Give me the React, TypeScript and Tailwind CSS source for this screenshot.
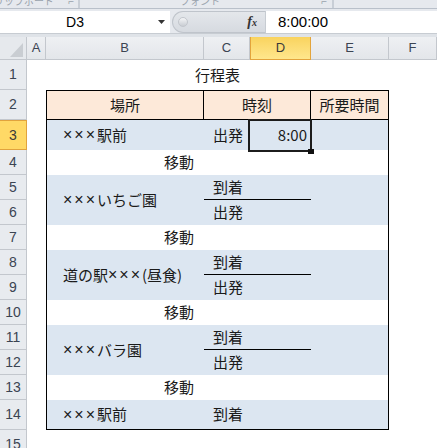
import React from "react"

const cols = ["A", "B", "C", "D", "E", "F"]
const colStart = ["col-start-2", "col-start-3", "col-start-4", "col-start-5", "col-start-6", "col-start-7"]
const rowStart = [
  "row-start-2", "row-start-3", "row-start-4", "row-start-5", "row-start-6",
  "row-start-7", "row-start-8", "row-start-9", "row-start-10", "row-start-11",
  "row-start-12", "row-start-13", "row-start-14", "row-start-15", "row-start-16",
]

const jp = "font-['Noto_Sans_CJK_JP',sans-serif] text-[15px] text-[#1a1a1a]"

// the reference's × marks are narrow half-width glyphs
function Xs() {
  return <span className="font-['Liberation_Sans',sans-serif] text-[16px] tracking-[2px]">×××</span>
}

function ColHeader({ label, i }: { label: string; i: number }) {
  const active = label === "D"
  return (
    <div
      className={`${colStart[i]} row-start-1 flex items-center justify-center text-[13px] font-['Liberation_Sans',sans-serif] border-b ${
        active
          ? "bg-gradient-to-b from-[#f9d35e] to-[#ffe78c] border-r border-l border-[#e3a43c] text-[#3a3a3a]"
          : "bg-gradient-to-b from-[#eef0f3] to-[#e3e6ea] border-r border-[#c3c7cd] text-[#3b4452]"
      }`}
    >
      {label}
    </div>
  )
}

function RowHeader({ n }: { n: number }) {
  const active = n === 3
  return (
    <div
      className={`col-start-1 ${rowStart[n - 1]} flex items-center justify-center text-[14px] font-['Liberation_Sans',sans-serif] border-r border-b ${
        active
          ? "bg-[#ffd966] border-[#e1a33d] border-t text-[#3a3a3a]"
          : "bg-[#e8ebef] border-[#c3c7cd] text-[#3b4452]"
      }`}
    >
      {n}
    </div>
  )
}

function Group({ row, name }: { row: number; name: React.ReactNode }) {
  // row = first inner grid row of a two-row stop
  const r1 = ["row-start-4", "row-start-7", "row-start-10"][[4, 7, 10].indexOf(row)]
  const r2 = ["row-start-5", "row-start-8", "row-start-11"][[4, 7, 10].indexOf(row)]
  return (
    <>
      <div className={`col-start-1 ${r1} row-span-2 bg-[#dce6f1] flex items-center pl-[16px]`}>{name}</div>
      <div className={`col-start-2 col-span-2 ${r1} bg-[#dce6f1] flex items-center pl-[9px] border-b border-black`}>到着</div>
      <div className={`col-start-2 col-span-2 ${r2} bg-[#dce6f1] flex items-center pl-[9px]`}>出発</div>
      <div className={`col-start-4 ${r1} row-span-2 bg-[#dce6f1]`} />
    </>
  )
}

function Move({ r }: { r: string }) {
  return <div className={`col-start-1 col-span-3 ${r} flex items-center justify-center`}>移動</div>
}

export default function App() {
  return (
    <div className="w-[437px] h-[448px] overflow-hidden bg-white">
      {/* ribbon remnant */}
      <div className="h-[9px] bg-[#e6e9ee] border-b border-[#b9c0ca] flex overflow-hidden text-[10px] text-[#9aa3ad] font-['Noto_Sans_CJK_JP',sans-serif] leading-[12px]">
        <div className="w-[79px] -mt-[5px] flex justify-between pr-[4px] border-r border-[#c8ced6]">
          <span className="-ml-[6px]">リップボード</span>
          <span>⌐</span>
        </div>
        <div className="w-[254px] -mt-[5px] flex justify-between pl-[100px] pr-[5px] border-l border-r border-[#c8ced6]">
          <span>フォント</span>
          <span>⌐</span>
        </div>
        <div className="flex-1 border-l border-[#c8ced6]" />
      </div>
      <div className="h-[2px] bg-[#e6e9ee]" />

      {/* formula bar */}
      <div className="h-[22px] flex bg-[#e6e9ee]">
        <div className="w-[170px] bg-white relative flex items-center">
          <div className="w-[150px] text-center text-[14px] font-['Liberation_Sans',sans-serif] text-black">D3</div>
          <svg className="absolute left-[158px] top-[9px]" width="7" height="4" viewBox="0 0 7 4">
            <path d="M0 0h7L3.5 4z" fill="#333" />
          </svg>
        </div>
        <div className="ml-[2px] w-[93px] rounded-l-full bg-gradient-to-b from-[#e4e7eb] to-[#d6dae0] border border-r-0 border-[#bfc4cb] flex items-center relative">
          <div className="ml-[5px] w-[10px] h-[10px] rounded-full bg-gradient-to-b from-[#f4f5f7] to-[#c9cdd3] border border-[#c2c6cc]" />
          <span className="absolute right-[8px] top-[2px] font-['Liberation_Serif',serif] italic font-bold text-[14px] text-[#333] leading-[16px]">
            f<span className="text-[10px]">x</span>
          </span>
        </div>
        <div className="flex-1 bg-white border-l border-[#c7ccd2] flex items-center pl-[12px] text-[15px] font-['Liberation_Sans',sans-serif] text-black">
          8:00:00
        </div>
      </div>
      <div className="h-[4px] bg-[#dfe3e8] border-t border-[#c7ccd2]" />

      {/* sheet */}
      <div className="grid grid-cols-[27px_19px_158px_46px_61px_78px_48px] grid-rows-[23px_30px_30px_30px_repeat(10,25px)_30px_30px]">
        <div className="col-start-1 row-start-1 bg-[#e6e9ed] border-r border-b border-[#c3c7cd] relative">
          <svg className="absolute left-[10px] top-[6px]" width="13" height="14" viewBox="0 0 13 14">
            <path d="M13 0V14H0z" fill="#c9cdd2" />
          </svg>
        </div>
        {cols.map((c, i) => (
          <ColHeader key={c} label={c} i={i} />
        ))}
        {Array.from({ length: 15 }, (_, i) => (
          <RowHeader key={i} n={i + 1} />
        ))}

        <div className={`col-start-3 col-span-4 row-start-2 flex items-center justify-center ${jp}`}>行程表</div>

        <div className={`col-start-3 col-span-4 row-start-3 row-span-13 border border-black grid grid-cols-[157px_46px_61px_77px] grid-rows-[29px_30px_repeat(10,25px)_29px] ${jp}`}>
          <div className="col-start-1 row-start-1 bg-[#fde9d9] border-r border-b border-black flex items-center justify-center">場所</div>
          <div className="col-start-2 col-span-2 row-start-1 bg-[#fde9d9] border-r border-b border-black flex items-center justify-center">時刻</div>
          <div className="col-start-4 row-start-1 bg-[#fde9d9] border-b border-black flex items-center justify-center">所要時間</div>

          <div className="col-start-1 row-start-2 bg-[#dce6f1] flex items-center pl-[16px]"><Xs />駅前</div>
          <div className="col-start-2 row-start-2 bg-[#dce6f1] flex items-center pl-[9px]">出発</div>
          <div className="col-start-3 row-start-2 bg-[#dce6f1] flex items-center justify-end pr-[4px] relative">
            8:00
            <div className="absolute -left-[2px] -top-[1px] -right-[1px] -bottom-[2px] border-2 border-[#1c1c1c]" />
            <div className="absolute -right-[3px] -bottom-[4px] w-[6px] h-[5px] bg-[#111]" />
          </div>
          <div className="col-start-4 row-start-2 bg-[#dce6f1]" />

          <Move r="row-start-3" />
          <Group row={4} name={<><Xs />いちご園</>} />
          <Move r="row-start-6" />
          <Group row={7} name={<>道の駅<Xs />(昼食)</>} />
          <Move r="row-start-9" />
          <Group row={10} name={<><Xs />バラ園</>} />
          <Move r="row-start-12" />

          <div className="col-start-1 row-start-13 bg-[#dce6f1] flex items-center pl-[16px]"><Xs />駅前</div>
          <div className="col-start-2 col-span-3 row-start-13 bg-[#dce6f1] flex items-center pl-[9px]">到着</div>
        </div>
      </div>
    </div>
  )
}
